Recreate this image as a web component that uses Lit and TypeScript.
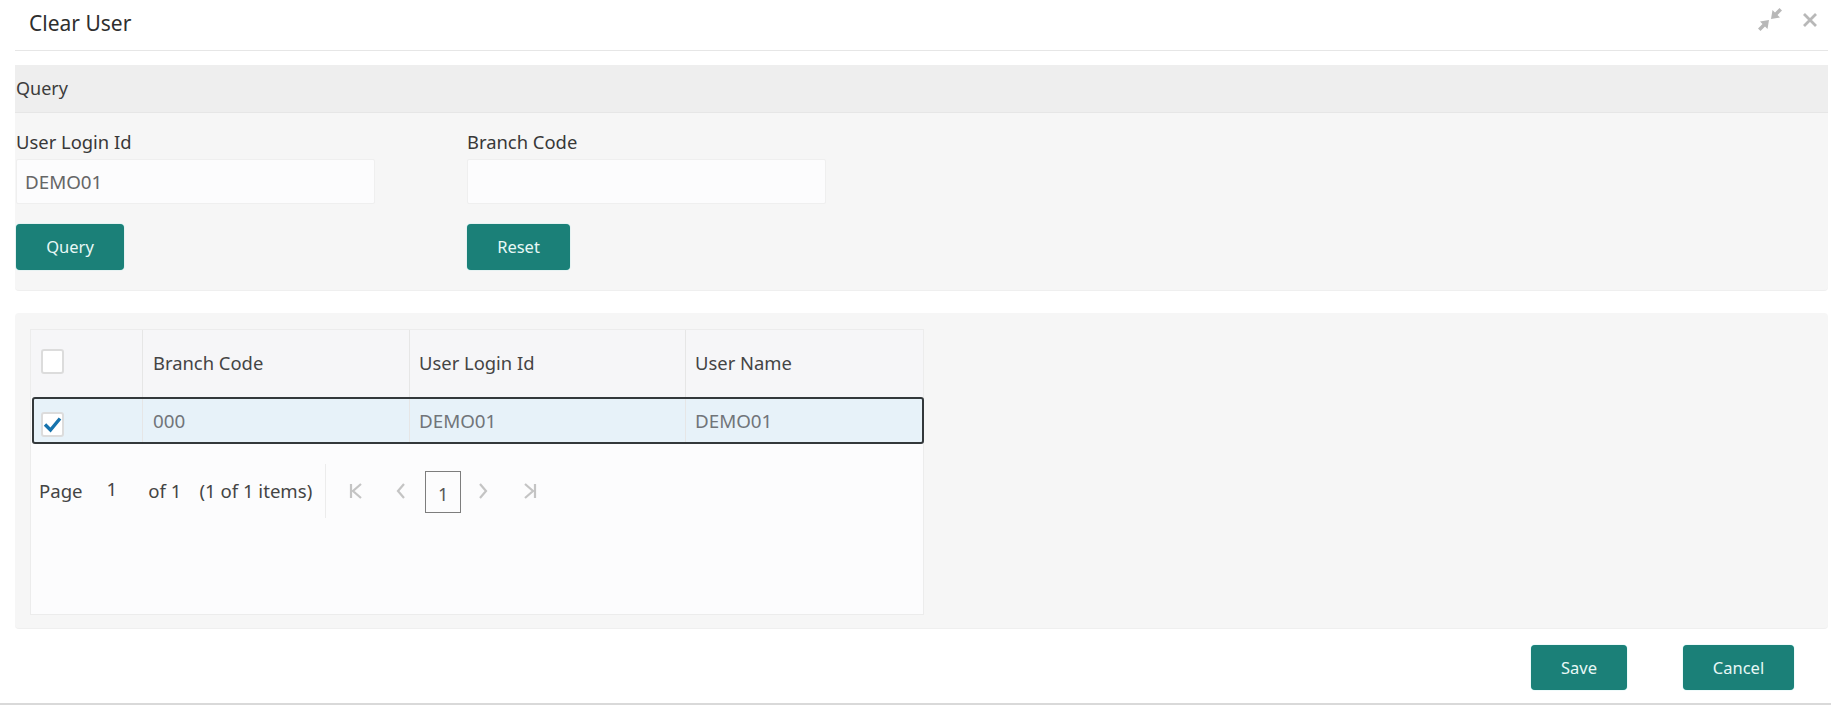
import { LitElement, html, css } from "lit";
import { customElement } from "lit/decorators.js";

@customElement("app-root")
export class AppRoot extends LitElement {
  static styles = css`
    :host { display: block; width: 1831px; height: 711px; background: #fff; overflow: hidden;
      font-family: "Noto Sans", "Open Sans", sans-serif; color: #333; box-sizing: border-box; }
    * { box-sizing: border-box; }
    .header { height: 51px; margin: 0 3px 0 15px; border-bottom: 1px solid #e6e6e6; display: flex; align-items: center;
      padding: 0 0 5px 14px; justify-content: space-between; }
    .title { font-size: 21px; color: #2e2e2e; }
    .win { display: flex; align-items: center; gap: 19px; padding: 0 10px 5px 0; }
    .query { margin: 14px 3px 0 15px; background: #f6f6f6; height: 226px; border-radius: 0 0 4px 4px; border-bottom: 1px solid #efefef; }
    .band { height: 48px; background: #eeeeee; border-bottom: 1px solid #e6e6e6; display: flex; align-items: center; padding: 0 0 2px 1px; font-size: 18px; color: #3c3c3c; }
    .fields { display: grid; grid-template-columns: 451px 360px; padding: 16px 0 0 1px; }
    .label { font-size: 18.4px; line-height: 26px; color: #383838; height: 30px; }
    .input { width: 359px; height: 45px; background: #fcfcfd; border: 1px solid #efefef; border-radius: 2px; padding: 0 8px;
      display: flex; align-items: center; font-size: 18.8px; color: #666; }
    .btn { display: flex; align-items: center; justify-content: center; background: #1b8078; color: #e8f8f6; border-radius: 4px;
      height: 45px; font-size: 16.5px; box-shadow: 0 0 1px #5fd6cf; }
    .field .btn { margin-top: 20px; height: 46px; padding-bottom: 1px; }
    .grid-panel { margin: 22px 3px 0 15px; height: 316px; background: #f6f6f6; border-radius: 4px; padding: 16px 0 0 15px; border-bottom: 1px solid #efefef; }
    .table { width: 894px; height: 286px; background: #fcfcfd; border: 1px solid #ececec; display: flex; flex-direction: column; }
    .row { display: grid; grid-template-columns: 112px 267px 276px 1fr; font-size: 18.4px; }
    .row > div { display: flex; align-items: center; padding-left: 9px; border-right: 1px solid #e6e6e6; }
    .row > div:nth-child(2) { padding-left: 10px; }
    .row > div:last-child { border-right: none; }
    .head { height: 67px; background: #f6f6f8; color: #444; }
    .head > div { padding-bottom: 2px; }
    .sel { height: 47px; margin-left: 1px; background: #e7f2f9; color: #717579; border: 2px solid #33383b; border-radius: 3px; margin-right: -1px; grid-template-columns: 109px 267px 276px 1fr; font-size: 18.8px; }
    .check { width: 23px; height: 25px; border: 2px solid #dcdcdc; border-radius: 3px; background: #fff; display: flex; align-items: center; justify-content: center; }
    .head > div.cb { padding: 0 0 5px 10px; }
    .sel > div.cb { padding: 8px 0 0 7px; }
    .pager { display: flex; align-items: center; height: 94px; padding-left: 8px; font-size: 18.6px; color: #444; }
    .t { margin-bottom: 2px; }
    .pager .num { margin-left: 24px; margin-bottom: 5px; }
    .of { margin-left: 31px; }
    .items { margin-left: 18px; }
    .sep { width: 1px; height: 54px; background: #ececec; margin-left: 13px; }
    .pg { display: flex; align-items: center; justify-content: center; }
    .pbox { width: 36px; height: 42px; margin-top: 2px; border: 1px solid #7d7d7d; display: flex; align-items: center; justify-content: center; font-size: 18px; padding-top: 3px; color: #555; }
    .footer { display: flex; justify-content: flex-end; gap: 56px; margin-top: 16px; padding-right: 37px; }
    .footline { margin: 13px 0 0 0; border-top: 2px solid #d9d9d9; }
    svg { display: block; }
  `;

  render() {
    return html`
      <div class="header">
        <div class="title">Clear User</div>
        <div class="win">
          <svg width="26" height="26" viewBox="0 0 26 26" fill="#b8b8b8">
            <path d="M25 3.5 L20.5 8 L23 10.5 L14 12 L15.5 3 L18 5.5 L22.5 1 Z"/>
            <path d="M1 21.5 L5.5 17 L3 14.5 L12 13 L10.5 22 L8 19.5 L3.5 24 Z"/>
          </svg>
          <svg width="16" height="16" viewBox="0 0 16 16" stroke="#b8b8b8" stroke-width="2.8" fill="none">
            <path d="M2 2 L14 14 M14 2 L2 14"/>
          </svg>
        </div>
      </div>

      <section class="query">
        <div class="band">Query</div>
        <div class="fields">
          <div class="field">
            <div class="label">User Login Id</div>
            <div class="input">DEMO01</div>
            <div class="btn" style="width:108px">Query</div>
          </div>
          <div class="field">
            <div class="label">Branch Code</div>
            <div class="input"></div>
            <div class="btn" style="width:103px">Reset</div>
          </div>
        </div>
      </section>

      <section class="grid-panel">
        <div class="table">
          <div class="row head">
            <div class="cb"><span class="check"></span></div>
            <div>Branch Code</div>
            <div>User Login Id</div>
            <div>User Name</div>
          </div>
          <div class="row sel">
            <div class="cb">
              <span class="check">
                <svg width="19" height="17" viewBox="0 0 19 17" fill="none" stroke="#1673ad" stroke-width="3.4">
                  <path d="M2 8.5 L7.5 14 L17 2.5"/>
                </svg>
              </span>
            </div>
            <div>000</div>
            <div>DEMO01</div>
            <div>DEMO01</div>
          </div>
          <div class="pager">
            <span class="t">Page</span>
            <span class="num">1</span>
            <span class="t of">of 1</span>
            <span class="t items">(1 of 1 items)</span>
            <span class="sep"></span>
            <span class="pg" style="margin-left:22px;width:16px">
              <svg width="14" height="16" viewBox="0 0 14 16" fill="none" stroke="#c4c4c4" stroke-width="2.2"><path d="M2 1V15M12 1L4 8L12 15"/></svg>
            </span>
            <span class="pg" style="margin-left:31px;width:12px">
              <svg width="10" height="16" viewBox="0 0 10 16" fill="none" stroke="#c4c4c4" stroke-width="2.2"><path d="M8 1L2 8L8 15"/></svg>
            </span>
            <span class="pbox" style="margin-left:18px">1</span>
            <span class="pg" style="margin-left:16px;width:12px">
              <svg width="10" height="16" viewBox="0 0 10 16" fill="none" stroke="#c4c4c4" stroke-width="2.2"><path d="M2 1L8 8L2 15"/></svg>
            </span>
            <span class="pg" style="margin-left:33px;width:16px">
              <svg width="14" height="16" viewBox="0 0 14 16" fill="none" stroke="#c4c4c4" stroke-width="2.2"><path d="M12 1V15M2 1L10 8L2 15"/></svg>
            </span>
          </div>
        </div>
      </section>

      <div class="footer">
        <div class="btn" style="width:96px">Save</div>
        <div class="btn" style="width:111px">Cancel</div>
      </div>
      <div class="footline"></div>
    `;
  }
}
